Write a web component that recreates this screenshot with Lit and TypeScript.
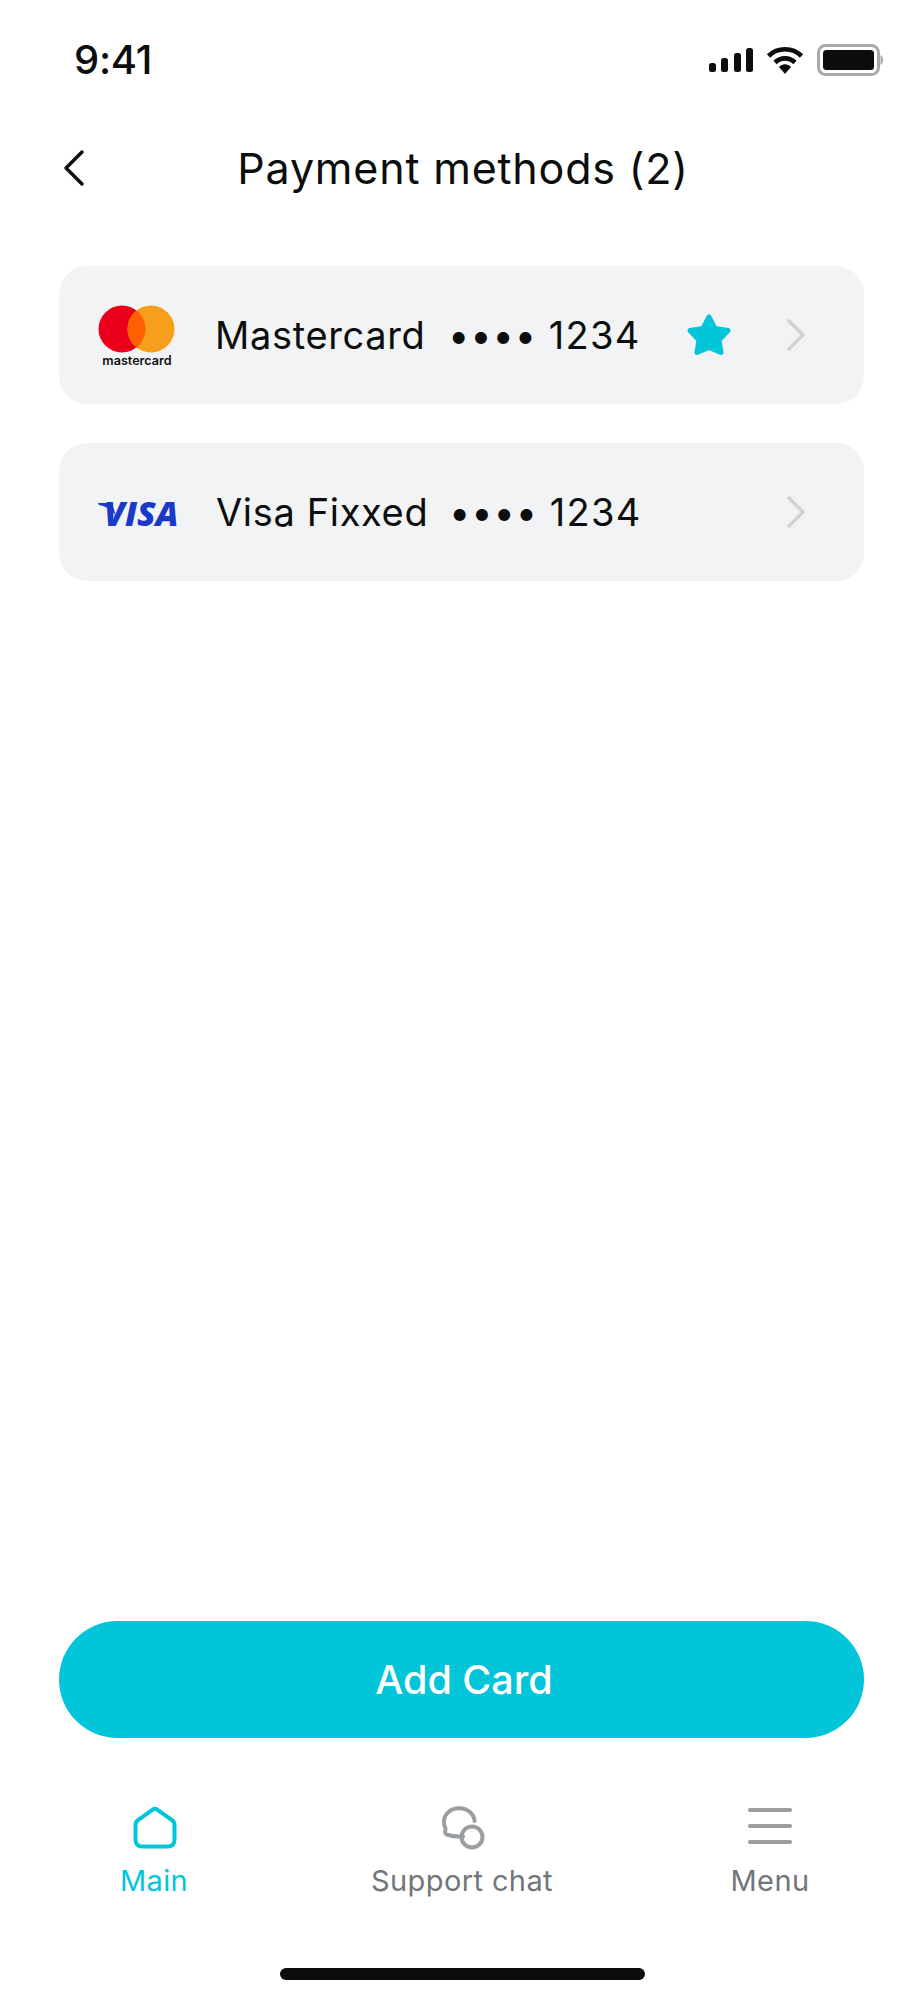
import { LitElement, css, html, svg } from 'lit';
import { customElement } from 'lit/decorators.js';

const chevron = svg`<path d="M3 3 L17 17 L3 31" fill="none" stroke="#d1d2d4" stroke-width="3.6" stroke-linecap="round" stroke-linejoin="round"/>`;

@customElement('app-root')
export class AppRoot extends LitElement {
  static styles = css`
    :host {
      display: flex;
      flex-direction: column;
      width: 924px;
      height: 2000px;
      background: #fff;
      color: #0c0e0d;
      font-family: Inter, "Liberation Sans", sans-serif;
    }

    svg { display: block; flex: none; }

    .status {
      box-sizing: border-box;
      display: flex;
      align-items: center;
      justify-content: space-between;
      height: 118px;
      padding: 2px 41px 0 74px;
    }
    .time { font-size: 40px; font-weight: 500; line-height: 1; letter-spacing: -0.3px; }
    .status-icons { display: flex; align-items: center; gap: 13px; }

    .header {
      display: flex;
      align-items: center;
      height: 100px;
      padding-left: 63px;
    }
    .title {
      flex: 1;
      text-align: center;
      padding-right: 83px;
      font-size: 43px;
      font-weight: 400;
      letter-spacing: 0.8px;
    }

    .cards {
      flex: 1;
      display: flex;
      flex-direction: column;
      gap: 39px;
      padding: 48px 60px 0 59px;
    }
    .card {
      display: flex;
      align-items: center;
      height: 138px;
      padding: 0 58px 0 39px;
      border-radius: 28px;
      background: #f2f3f5;
      font-size: 38px;
      letter-spacing: 0.65px;
    }
    .logo { width: 117px; flex: none; letter-spacing: 0; }
    .mc-word {
      display: block;
      width: 78px;
      margin-top: 1px;
      text-align: center;
      font-size: 12.6px;
      font-weight: 600;
      line-height: 14px;
      color: #111;
    }
    .mc { margin-top: 3px; }
    .visa-mark {
      position: relative;
      display: inline-block;
      padding: 0 0 3px 6px;
      font-family: "Open Sans", sans-serif;
      font-size: 34px;
      font-weight: 800;
      font-style: italic;
      line-height: 26px;
      color: #1a39c9;
    }
    .swoosh { position: absolute; left: 0; top: 2px; }
    .name { width: 233px; flex: none; }
    .visa .name, .visa .dots { position: relative; left: 1px; }
    .dots { letter-spacing: 0.9px; }
    .num { letter-spacing: 1.3px; }
    .star { margin-left: auto; margin-right: 54px; }
    .chev { margin-left: auto; }
    .star + .chev { margin-left: 0; }

    .add {
      margin: 0 60px 0 59px;
      padding-left: 5px;
      height: 117px;
      border-radius: 59px;
      background: #03c5d9;
      color: #fff;
      display: flex;
      align-items: center;
      justify-content: center;
      font-size: 39.5px;
      font-weight: 500;
    }

    .tabs {
      display: grid;
      grid-template-columns: repeat(3, 1fr);
      margin-top: 68px;
    }
    .tab {
      display: flex;
      flex-direction: column;
      align-items: center;
      gap: 13px;
      color: #71767a;
      font-size: 29px;
      line-height: 36px;
      letter-spacing: 0.4px;
    }
    .tab.on { color: #03c5d9; }
    .tab.on svg { margin-left: 1px; }

    .home-bar {
      width: 365px;
      height: 12px;
      border-radius: 6px;
      background: #0a0c0b;
      margin: 69px auto 20px;
    }
  `;

  render() {
    return html`
      <div class="status">
        <span class="time">9:41</span>
        <div class="status-icons">
          <svg width="44" height="24" viewBox="0 0 44 24" fill="#0c0e0d">
            <rect x="0" y="15" width="7" height="9" rx="2.5"/>
            <rect x="12" y="10" width="7" height="14" rx="2.5"/>
            <rect x="25" y="5" width="7" height="19" rx="2.5"/>
            <rect x="37" y="0" width="7" height="24" rx="2.5"/>
          </svg>
          <svg width="38" height="28" viewBox="0 0 38 28">
            <path d="M2.5 10 C11.5 1 26.5 1 35.5 10" fill="none" stroke="#0c0e0d" stroke-width="4.6"/>
            <path d="M9 16.5 C14.5 11 23.5 11 29 16.5" fill="none" stroke="#0c0e0d" stroke-width="4.6"/>
            <path d="M13 21 C16.5 17.4 21.5 17.4 25 21 L19 28 Z" fill="#0c0e0d"/>
          </svg>
          <svg width="66" height="32" viewBox="0 0 66 32">
            <rect x="1.5" y="1.5" width="60" height="29" rx="7" fill="none" stroke="#a9a9a9" stroke-width="3"/>
            <rect x="6" y="6" width="51" height="20" rx="3.5" fill="#0c0e0d"/>
            <path d="M63.5 11 C65.5 12 66 14 66 16 C66 18 65.5 20 63.5 21 Z" fill="#a9a9a9"/>
          </svg>
        </div>
      </div>

      <div class="header">
        <svg width="22" height="38" viewBox="0 0 22 38">
          <path d="M19 3 L3 19 L19 35" fill="none" stroke="#0c0e0d" stroke-width="3.4" stroke-linecap="round" stroke-linejoin="round"/>
        </svg>
        <div class="title">Payment methods (2)</div>
      </div>

      <div class="cards">
        <div class="card">
          <div class="logo mc">
            <svg width="78" height="48" viewBox="0 0 78 48">
              <circle cx="24" cy="24" r="23.5" fill="#eb001b"/>
              <circle cx="53" cy="24" r="23.5" fill="#f79e1b"/>
              <path d="M38.5 5.5 C44 9.8 47.5 16.5 47.5 24 C47.5 31.5 44 38.2 38.5 42.5 C33 38.2 29.5 31.5 29.5 24 C29.5 16.5 33 9.8 38.5 5.5 Z" fill="#ff5f00"/>
            </svg>
            <span class="mc-word">mastercard</span>
          </div>
          <span class="name">Mastercard</span>
          <span class="dots">•••• <span class="num">1234</span></span>
          <svg class="star" width="46" height="44" viewBox="0 0 46 44">
            <path d="M23 4 L29 15.5 L42 17.5 L33 27 L35 39.5 L23 34.5 L11 39.5 L13 27 L4 17.5 L17 15.5 Z" fill="#03c5d9" stroke="#03c5d9" stroke-width="5" stroke-linejoin="round"/>
          </svg>
          <svg class="chev" width="20" height="34" viewBox="0 0 20 34">${chevron}</svg>
        </div>
        <div class="card visa">
          <div class="logo">
            <span class="visa-mark">VISA<svg class="swoosh" width="18" height="14" viewBox="0 0 18 14"><path d="M0 1 L14 1 L18 14 C14 8 8 4 1 3 Z" fill="#1a39c9"/></svg></span>
          </div>
          <span class="name">Visa Fixxed</span>
          <span class="dots">•••• <span class="num">1234</span></span>
          <svg class="chev" width="20" height="34" viewBox="0 0 20 34">${chevron}</svg>
        </div>
      </div>

      <div class="add">Add Card</div>

      <div class="tabs">
        <div class="tab on">
          <svg width="44" height="44" viewBox="0 0 44 44">
            <path d="M19.7 3.6 L5 14.2 C3.4 15.4 2.5 17 2.5 19 V33.5 C2.5 38 5 40.5 9.5 40.5 H34.5 C39 40.5 41.5 38 41.5 33.5 V19 C41.5 17 40.6 15.4 39 14.2 L24.3 3.6 C22.9 2.6 21.1 2.6 19.7 3.6 Z" fill="none" stroke="#03c5d9" stroke-width="4" stroke-linejoin="round"/>
          </svg>
          <span>Main</span>
        </div>
        <div class="tab">
          <svg width="46" height="44" viewBox="0 0 46 44">
            <path d="M24 30.5 C15 31 12 30 9 29 C6 28.5 5.5 26 6.5 24 C7 22.5 6 21 5.2 19 C3.5 10 10 2.2 20 2.2 C29 2.2 35 8 35.6 15" fill="none" stroke="#9a9ea1" stroke-width="4" stroke-linecap="round"/>
            <circle cx="33" cy="31" r="10.5" fill="none" stroke="#9a9ea1" stroke-width="4"/>
          </svg>
          <span>Support chat</span>
        </div>
        <div class="tab">
          <svg width="44" height="44" viewBox="0 0 44 44" fill="#9a9ea1">
            <rect x="0" y="2" width="44" height="4" rx="2"/>
            <rect x="0" y="18" width="44" height="4" rx="2"/>
            <rect x="0" y="34" width="44" height="4" rx="2"/>
          </svg>
          <span>Menu</span>
        </div>
      </div>

      <div class="home-bar"></div>
    `;
  }
}
